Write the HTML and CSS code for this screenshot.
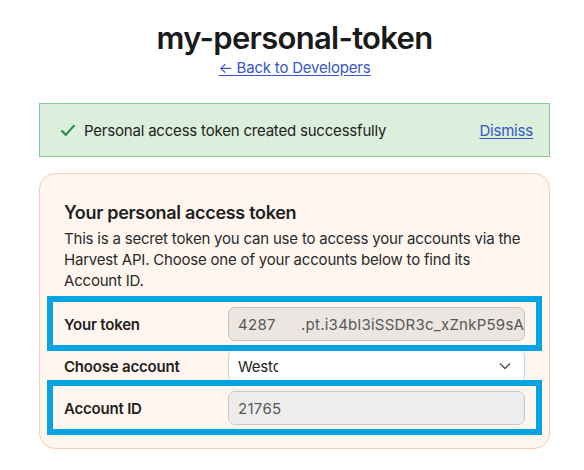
FILE: index.html
```html
<!DOCTYPE html>
<html>
<head>
<meta charset="utf-8">
<link rel="stylesheet" href="styles.css">
</head>
<body>
<main class="page">
  <header class="head">
    <h1 class="title">my-personal-token</h1>
    <a class="back" href="#">&larr; Back to Developers</a>
  </header>
  <div class="banner">
    <svg class="check" width="16" height="14" viewBox="0 0 16 14"><path d="M1.5 7.5 L5.8 11.8 L14.5 2.2" fill="none" stroke="#1f8a45" stroke-width="2"/></svg>
    <span class="banner-text">Personal access token created successfully</span>
    <a class="dismiss" href="#">Dismiss</a>
  </div>
  <section class="card">
    <h2 class="card-title">Your personal access token</h2>
    <p class="card-desc">This is a secret token you can use to access your accounts via the Harvest API. Choose one of your accounts below to find its Account ID.</p>
    <div class="rows">
      <div class="row hl">
        <span class="label">Your token</span>
        <div class="field field-token"><span class="v1">4287</span><span class="v2">.pt.i34bl3iSSDR3c_xZnkP59sA</span></div>
      </div>
      <div class="row">
        <span class="label">Choose account</span>
        <div class="field field-select"><span class="clip">Weston</span>
          <svg class="chev" width="12" height="8" viewBox="0 0 12 8"><path d="M1 1.5 L6 6.5 L11 1.5" fill="none" stroke="#555" stroke-width="1.4"/></svg>
        </div>
      </div>
      <div class="row hl">
        <span class="label">Account ID</span>
        <div class="field field-id"><span class="clip clip-id">217654</span></div>
      </div>
    </div>
  </section>
</main>
</body>
</html>
```
FILE: styles.css
```css
html, body {
  margin: 0;
  padding: 0;
  background: #ffffff;
}
body {
  font-family: Inter, "Noto Sans", sans-serif;
  color: #1f1f1f;
  letter-spacing: -0.2px;
}
.page {
  width: 511px;
  margin-left: 39px;
  padding-top: 18px;
}
.head {
  display: flex;
  flex-direction: column;
  align-items: center;
}
.title {
  margin: 0;
  font-size: 31px;
  line-height: 40px;
  font-weight: 600;
  letter-spacing: -0.7px;
  color: #1a1a1a;
}
.back {
  font-size: 15px;
  line-height: 20px;
  color: #3656c8;
  text-decoration: underline;
  text-underline-offset: 2px;
}
.banner {
  margin-top: 25px;
  height: 52px;
  border: 1px solid #8cc897;
  background: #dbefdc;
  display: flex;
  align-items: center;
  padding: 0 16px 0 20px;
  font-size: 15px;
}
.check {
  margin-right: 8px;
}
.banner-text {
  flex: 1;
  color: #222;
}
.dismiss {
  color: #3656c8;
  text-decoration: underline;
  text-underline-offset: 2px;
}
.card {
  margin-top: 16px;
  background: #fff6ef;
  border: 1px solid #f8cdb0;
  border-radius: 16px;
  padding: 27px 24px 23px 24px;
}
.card-title {
  margin: 0;
  font-size: 18px;
  line-height: 24px;
  font-weight: 600;
  letter-spacing: -0.3px;
  color: #1f1f1f;
}
.card-desc {
  margin: 3px 0 0;
  font-size: 15px;
  line-height: 21px;
  color: #2a2a2a;
}
.rows {
  margin-top: 16px;
  display: flex;
  flex-direction: column;
  gap: 8px;
}
.row {
  display: grid;
  grid-template-columns: 164px 1fr;
  align-items: center;
  height: 34px;
}
.hl {
  position: relative;
}
.hl::after {
  content: "";
  position: absolute;
  top: -11px;
  bottom: -10px;
  left: -17px;
  right: -17px;
  border: 6px solid #05a2e4;
  pointer-events: none;
  z-index: 1;
}
.label {
  font-size: 15px;
  font-weight: 600;
  color: #1f1f1f;
}
.field {
  height: 34px;
  box-sizing: border-box;
  border-radius: 7px;
  display: flex;
  align-items: center;
  padding: 0 9px;
  font-size: 15px;
  overflow: hidden;
  white-space: nowrap;
}
.field-token {
  background: #ebe6e1;
  border: 1px solid #c8c2bd;
  color: #585858;
}
.v1 {
  width: 63px;
  flex: none;
  letter-spacing: 0.3px;
}
.v2 {
  color: #585858;
  letter-spacing: 0.25px;
}
.field-select {
  background: #ffffff;
  border: 1px solid #cfcfcf;
  color: #1f1f1f;
  justify-content: space-between;
}
.clip {
  display: inline-block;
  width: 40px;
  overflow: hidden;
}
.chev {
  margin-right: 4px;
}
.field-id {
  background: #ededed;
  border: 1px solid #c9c9c9;
  color: #585858;
}
.clip-id {
  width: 44px;
  letter-spacing: 0.3px;
}
```
